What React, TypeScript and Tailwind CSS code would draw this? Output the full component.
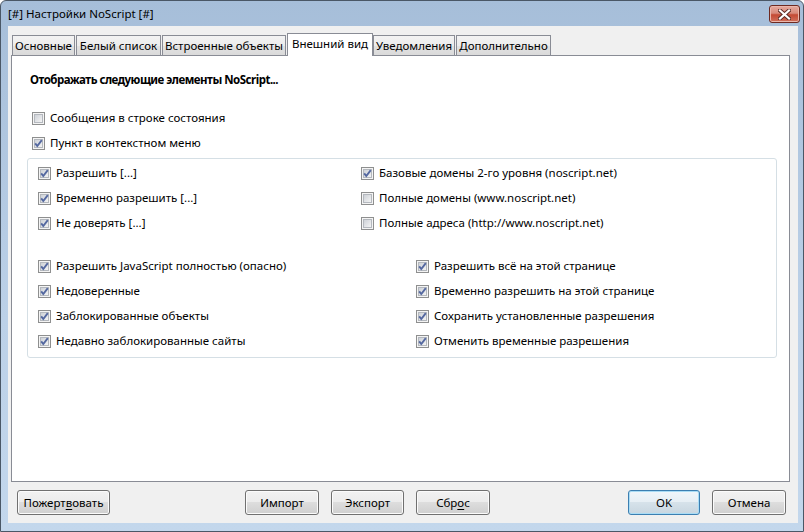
import React from "react";

const Check = ({ checked }: { checked?: boolean }) => (
  <svg width="13" height="13" viewBox="0 0 13 13" className="shrink-0 block">
    <defs>
      <linearGradient id="cbin" x1="0" y1="0" x2="1" y2="1">
        <stop offset="0" stopColor="#cbcfd5" />
        <stop offset="1" stopColor="#f6f6f6" />
      </linearGradient>
    </defs>
    <rect x="0.5" y="0.5" width="12" height="12" fill="#f4f4f4" stroke="#8e8f8f" />
    <rect x="2.5" y="2.5" width="8" height="8" fill="url(#cbin)" stroke="#b4b8be" />
    {checked && (
      <path d="M3.2 6.3 L5.3 9 L9.8 3.2" stroke="#5468a0" strokeWidth="1.9" fill="none" strokeLinejoin="miter" />
    )}
  </svg>
);

const Row = ({ label, checked }: { label: string; checked?: boolean }) => (
  <div className="h-[25px] flex items-center gap-[5px] whitespace-nowrap">
    <Check checked={checked} />
    <span className="-mt-px">{label}</span>
  </div>
);

const Btn = ({ w, children, def }: { w: string; children: React.ReactNode; def?: boolean }) => (
  <div
    className={
      "h-[25px] flex items-center justify-center rounded-[3px] border " +
      w +
      " " +
      (def
        ? "border-[#3c7fb1] shadow-[inset_0_0_0_1px_#a9dcf5] bg-[linear-gradient(#f0f6fa_0%,#e6eef4_50%,#d6e2ea_50%,#c8d6e0_100%)]"
        : "border-[#707070] shadow-[inset_0_0_0_1px_#fbfbfb] bg-[linear-gradient(#f2f2f2_0%,#ebebeb_50%,#dddddd_50%,#cfcfcf_100%)]")
    }
  >
    {children}
  </div>
);

const Tab = ({ w, label, sel, ml }: { w: string; label: string; sel?: boolean; ml?: string }) =>
  sel ? (
    <div className={"h-[23px] flex items-center justify-center whitespace-nowrap bg-white border-t border-l border-r border-[#898c95] pb-[2px] " + w + " " + (ml || "")}>
      {label}
    </div>
  ) : (
    <div
      className={
        "h-[21px] flex items-center justify-center whitespace-nowrap border border-[#898c95] bg-[linear-gradient(#f3f3f3_0%,#ececec_50%,#e2e2e2_50%,#dadada_100%)] " +
        w +
        " " +
        (ml || "")
      }
    >
      {label}
    </div>
  );

export default function App() {
  return (
    <div className="w-[804px] h-[532px] bg-white font-['Noto_Sans',sans-serif] text-[11.5px] leading-[16px] text-black">
      <div className="w-[804px] h-[532px] flex flex-col border border-[#4a5766] rounded-t-[6px] bg-[linear-gradient(#a6bed9,#bcd1e8_60%,#c3d7ec)]">
        <div className="h-[25px] shrink-0 flex items-start pl-[7px] pr-[3px]">
          <span className="mt-[5px]">[#] Настройки NoScript [#]</span>
          <div className="ml-auto mt-[4px] w-[31px] h-[18px] rounded-[3px] border border-[#6e2a21] bg-[linear-gradient(#e6aa9e_0%,#d88a7b_45%,#c44a34_55%,#d0705c_100%)] shadow-[inset_0_0_0_1px_#eab7ac] flex items-center justify-center">
            <svg width="13" height="11" viewBox="0 0 13 11">
              <path d="M2 1.5 L11 9.5 M11 1.5 L2 9.5" stroke="#5a2a24" strokeWidth="4" strokeLinecap="square" />
              <path d="M2 1.5 L11 9.5 M11 1.5 L2 9.5" stroke="#ffffff" strokeWidth="2.2" strokeLinecap="square" />
            </svg>
          </div>
        </div>
        <div className="ml-[7px] mr-[5px] mb-[8px] flex-1 flex flex-col bg-[#f0f0f0]">
          <div className="relative z-10 h-[23px] mt-[7px] -mb-px flex items-end pl-[4px]">
            <Tab w="w-[63px]" label="Основные" />
            <Tab w="w-[85px]" ml="ml-[1px]" label="Белый список" />
            <Tab w="w-[124px]" ml="ml-[1px]" label="Встроенные объекты" />
            <Tab w="w-[86px]" ml="ml-[1px]" label="Внешний вид" sel />
            <Tab w="w-[82px]" label="Уведомления" />
            <Tab w="w-[95px]" ml="ml-[1px]" label="Дополнительно" />
          </div>
          <div className="flex-1 ml-[3px] mr-[8px] bg-white border border-[#898c95] pl-[15px] pr-[12px] pt-[16px]">
            <div className="ml-[3px] font-bold tracking-[-0.5px]">Отображать следующие элементы NoScript...</div>
            <div className="mt-[18px] pl-[5px]">
              <Row label="Сообщения в строке состояния" />
              <Row label="Пункт в контекстном меню" checked />
            </div>
            <div className="mt-[2px] border border-[#d5dfe5] rounded-[3px] pl-[10px] pt-[2px] pb-[3px]">
              <div className="grid grid-cols-[323px_1fr]">
                <Row label="Разрешить [...]" checked />
                <Row label="Базовые домены 2-го уровня (noscript.net)" checked />
                <Row label="Временно разрешить [...]" checked />
                <Row label="Полные домены (www.noscript.net)" />
                <Row label="Не доверять [...]" checked />
                <Row label="Полные адреса (http://www.noscript.net)" />
              </div>
              <div className="mt-[18px] grid grid-cols-[378px_1fr]">
                <Row label="Разрешить JavaScript полностью (опасно)" checked />
                <Row label="Разрешить всё на этой странице" checked />
                <Row label="Недоверенные" checked />
                <Row label="Временно разрешить на этой странице" checked />
                <Row label="Заблокированные объекты" checked />
                <Row label="Сохранить установленные разрешения" checked />
                <Row label="Недавно заблокированные сайты" checked />
                <Row label="Отменить временные разрешения" checked />
              </div>
            </div>
          </div>
          <div className="h-[25px] mt-[8px] mb-[8px] flex pl-[9px] pr-[12px]">
            <Btn w="w-[93px]">
              <span>
                Пожерт<span className="underline underline-offset-2">в</span>овать
              </span>
            </Btn>
            <div className="ml-[135px] flex gap-[12px]">
              <Btn w="w-[74px]">Импорт</Btn>
              <Btn w="w-[73px]">Экспорт</Btn>
              <Btn w="w-[74px]">
                <span>
                  Сбр<span className="underline underline-offset-2">о</span>с
                </span>
              </Btn>
            </div>
            <div className="ml-auto flex gap-[12px]">
              <Btn w="w-[72px]" def>
                OK
              </Btn>
              <Btn w="w-[74px]">Отмена</Btn>
            </div>
          </div>
        </div>
      </div>
    </div>
  );
}
